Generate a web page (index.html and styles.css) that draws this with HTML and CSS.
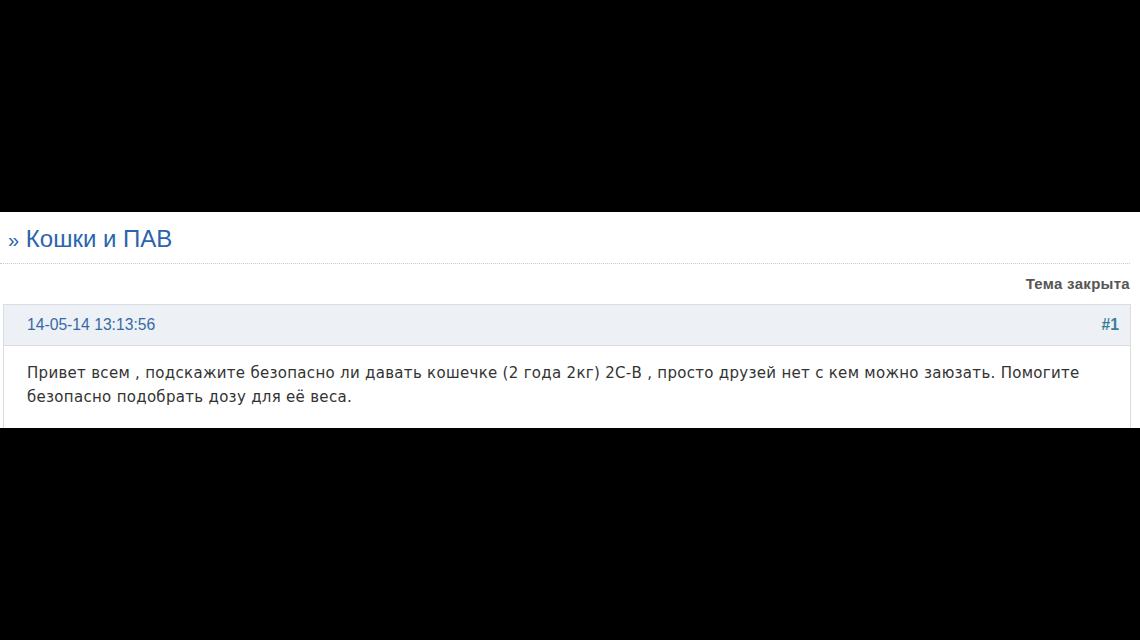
FILE: index.html
```html
<!DOCTYPE html>
<html lang="ru">
<head>
    <meta charset="UTF-8">
    <title>Кошки и ПАВ</title>
    <link rel="stylesheet" href="styles.css">
</head>
<body>

<div class="page">
    <h1 class="topic-title"><span class="raquo">»</span> <a href="#">Кошки и ПАВ</a></h1>

    <div class="topic-status">Тема закрыта</div>

    <div class="post">
        <div class="post-head">
            <span class="post-date">14-05-14 13:13:56</span>
            <a class="post-num" href="#">#1</a>
        </div>
        <div class="post-body">
            Привет всем , подскажите безопасно ли давать кошечке (2 года 2кг) 2С-В , просто друзей нет с кем можно заюзать. Помогите безопасно подобрать дозу для её веса.
        </div>
    </div>
</div>

</body>
</html>
```

FILE: styles.css
```css
html, body {
    margin: 0;
    padding: 0;
    background: #000;
    height: 640px;
    overflow: hidden;
}
.page {
    margin-top: 212px;
    height: 216px;
    overflow: hidden;
    background: #fff;
    font-family: "Liberation Sans", Arial, sans-serif;
}
.topic-title {
    margin: 0 10px 0 0;
    padding: 13px 0 9px 8px;
    font-size: 24px;
    font-weight: normal;
    line-height: 27px;
    color: #2b64ad;
    border-bottom: 1px dotted #c8c8c8;
}
.topic-title .raquo {
    font-size: 20px;
    color: #2b64ad;
}
.topic-title a {
    color: #2b64ad;
    text-decoration: none;
}
.topic-status {
    text-align: right;
    padding: 11px 10px 0 0;
    height: 29px;
    font-size: 15px;
    letter-spacing: 0.3px;
    font-weight: bold;
    color: #555;
}
.post {
    margin: 0 9px 0 3px;
    border: 1px solid #d8dde4;
}
.post-head {
    display: flex;
    justify-content: space-between;
    align-items: center;
    height: 40px;
    padding: 0 11px 0 23px;
    background: #edf1f6;
    border-bottom: 1px solid #d8dde4;
    font-size: 15.7px;
}
.post-date {
    color: #3569a6;
}
.post-num {
    color: #3a7d99;
    font-weight: bold;
    text-decoration: none;
}
.post-body {
    padding: 15px 23px 30px;
    font-family: "DejaVu Sans", Verdana, sans-serif;
    font-size: 15px;
    letter-spacing: 0.3px;
    line-height: 24px;
    color: #333;
}
```
